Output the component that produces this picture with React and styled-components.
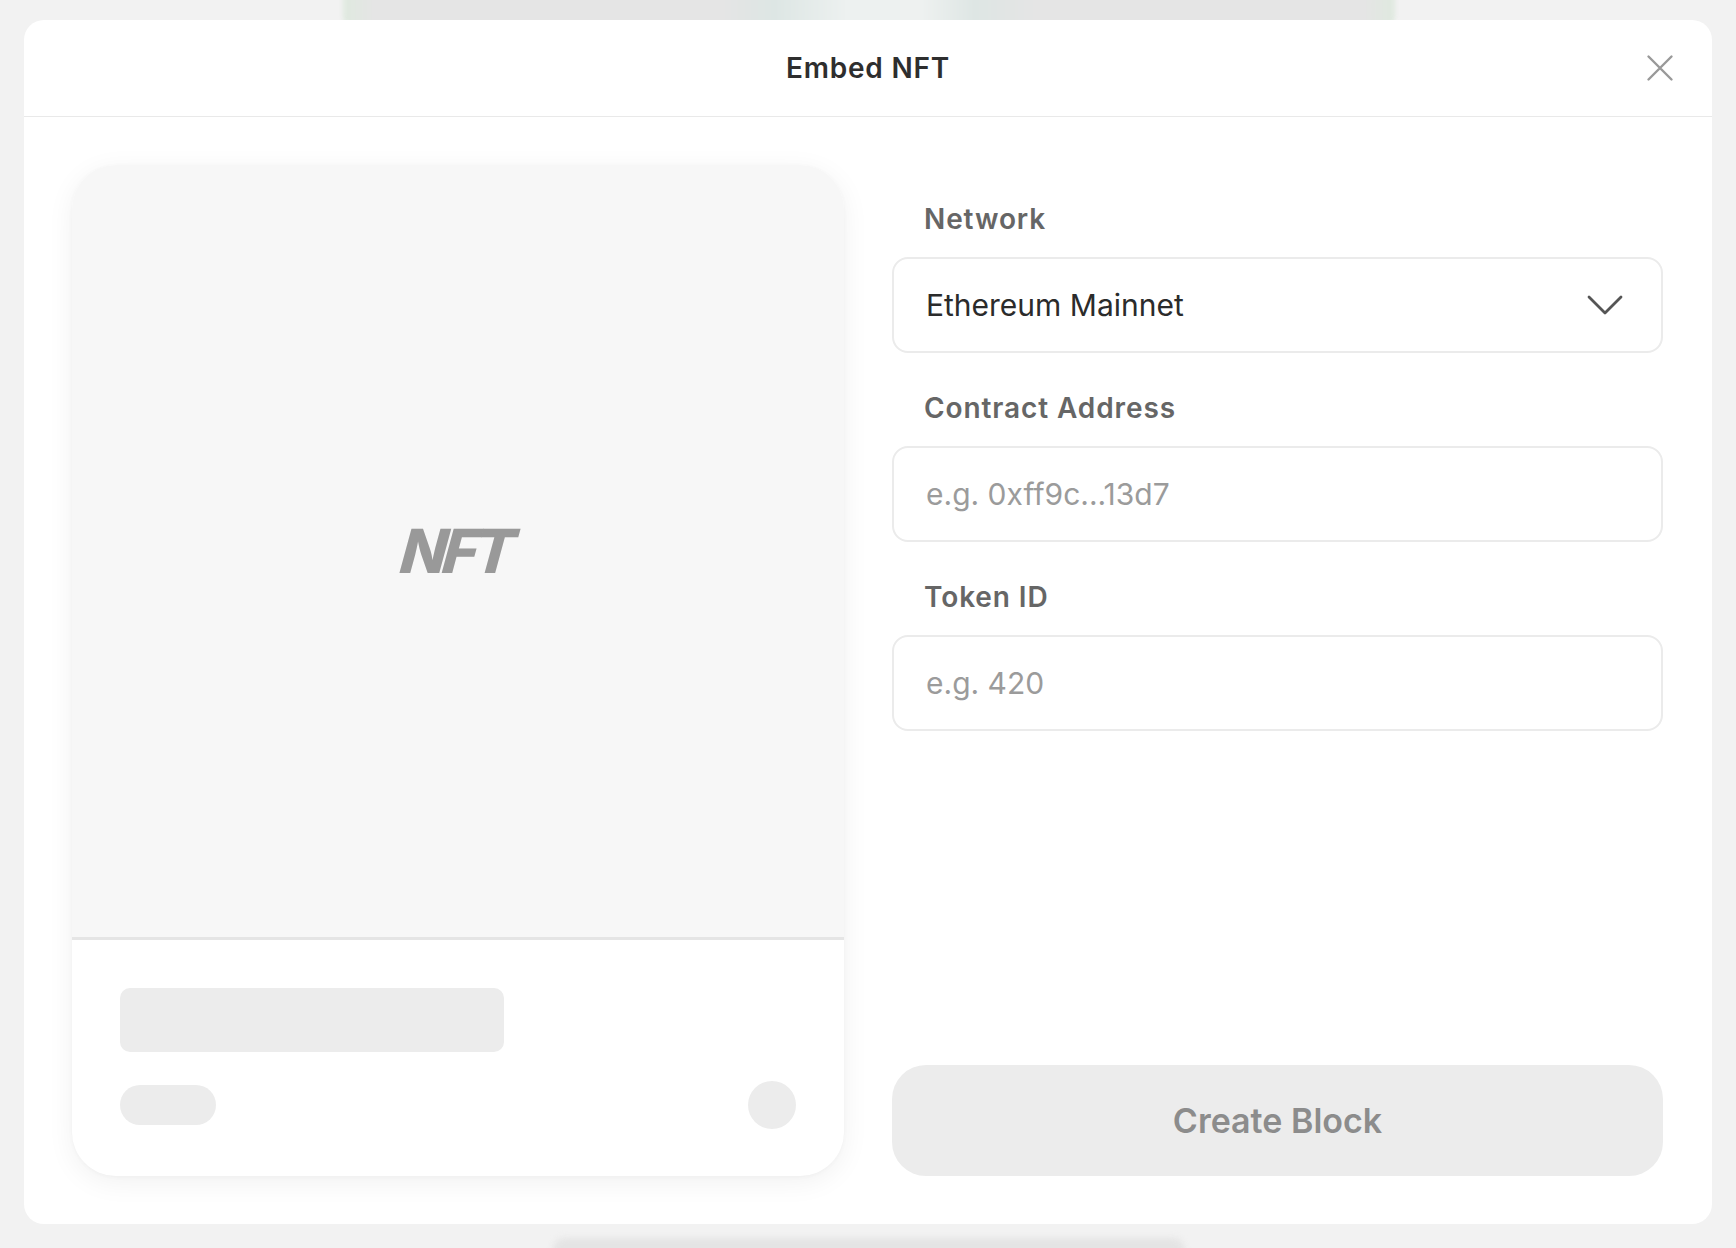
import React from "react";
import styled, { createGlobalStyle } from "styled-components";

const GlobalStyle = createGlobalStyle`
  html, body {
    margin: 0;
    padding: 0;
    background: #f2f2f2;
    font-family: Inter, "Noto Sans", "Liberation Sans", sans-serif;
    -webkit-font-smoothing: antialiased;
  }
  * { box-sizing: border-box; }
`;

const Page = styled.div`
  position: relative;
  width: 1736px;
  height: 1248px;
  overflow: hidden;
  padding: 20px 24px 24px;
`;

// content of the page behind the dialog
const BackdropTop = styled.div`
  position: absolute;
  top: -20px;
  left: 343px;
  width: 1052px;
  height: 48px;
  border-radius: 12px;
  background: linear-gradient(
    90deg,
    #dfe9df 0%,
    #e5e5e5 3%,
    #e5e5e5 36%,
    #dde6e4 41%,
    #edf1f0 48%,
    #eef1f0 55%,
    #dee6e4 60%,
    #e5e5e5 66%,
    #e5e5e5 97%,
    #dfe9df 100%
  );
  filter: blur(2px);
`;

const BackdropBottom = styled.div`
  position: absolute;
  bottom: -30px;
  left: 553px;
  width: 632px;
  height: 40px;
  border-radius: 12px;
  background: #e4e4e4;
  filter: blur(3px);
`;

const Modal = styled.div`
  position: relative;
  display: flex;
  flex-direction: column;
  width: 1688px;
  height: 1204px;
  background: #fff;
  border-radius: 20px;
  overflow: hidden;
`;

const Header = styled.div`
  position: relative;
  display: flex;
  align-items: center;
  justify-content: center;
  height: 97px;
  flex-shrink: 0;
  border-bottom: 1px solid #e9e9e9;
`;

const Title = styled.h1`
  margin: 0;
  font-size: 28px;
  font-weight: 600;
  color: #2e2e2e;
  letter-spacing: 0.8px;
`;

const CloseButton = styled.button`
  position: absolute;
  right: 38px;
  top: 50%;
  transform: translateY(-50%);
  display: flex;
  padding: 0;
  border: 0;
  background: none;
  cursor: pointer;
`;

const Body = styled.div`
  flex: 1;
  display: grid;
  grid-template-columns: 772px 771px;
  gap: 48px;
  padding: 48px;
`;

const PreviewCard = styled.div`
  display: flex;
  flex-direction: column;
  border-radius: 44px;
  overflow: hidden;
  background: #fff;
  box-shadow: 0 6px 28px rgba(0, 0, 0, 0.06), 0 1px 4px rgba(0, 0, 0, 0.03);
`;

const Artwork = styled.div`
  display: flex;
  align-items: center;
  justify-content: center;
  height: 775px;
  flex-shrink: 0;
  background: #f7f7f7;
  border-bottom: 3px solid #e5e5e5;
`;

const NftMark = styled.span`
  margin-right: 4px;
  font-size: 61px;
  font-weight: 800;
  font-style: italic;
  letter-spacing: -4.5px;
  color: #999;
  transform: skewX(-6deg);
`;

const CardFooter = styled.div`
  flex: 1;
  display: flex;
  flex-direction: column;
  gap: 29px;
  padding: 48px 48px 47px;
`;

const Skeleton = styled.div`
  width: ${(p) => p.$w}px;
  height: ${(p) => p.$h}px;
  border-radius: ${(p) => p.$r}px;
  background: #ececec;
`;

const FooterRow = styled.div`
  display: flex;
  align-items: center;
  justify-content: space-between;
`;

const Form = styled.div`
  display: flex;
  flex-direction: column;
  padding-top: 38px;
`;

const Field = styled.div`
  display: flex;
  flex-direction: column;
  gap: 22px;
  margin-bottom: 39px;
`;

const Label = styled.label`
  padding-left: 32px;
  font-size: 28px;
  line-height: 32px;
  font-weight: 600;
  letter-spacing: 0.9px;
  color: #666;
`;

const Box = styled.div`
  display: flex;
  align-items: center;
  justify-content: space-between;
  height: 96px;
  padding: 0 38px 0 32px;
  border: 2px solid #ebebeb;
  border-radius: 16px;
  background: #fff;
  font-size: 30px;
  color: ${(p) => (p.$placeholder ? "#9b9b9b" : "#2b2b2b")};
`;

const CreateButton = styled.button`
  margin-top: auto;
  height: 111px;
  border: 0;
  border-radius: 34px;
  background: #ececec;
  font-family: inherit;
  font-size: 34px;
  font-weight: 600;
  color: #8c8c8c;
`;

const CloseIcon = () => (
  <svg width="28" height="28" viewBox="0 0 28 28" fill="none">
    <path d="M2.5 2.5L25.5 25.5M25.5 2.5L2.5 25.5" stroke="#999" strokeWidth="2.4" strokeLinecap="round" />
  </svg>
);

const Chevron = () => (
  <svg width="36" height="22" viewBox="0 0 36 22" fill="none">
    <path d="M2 3L18 19L34 3" stroke="#555" strokeWidth="2.8" strokeLinecap="round" strokeLinejoin="round" />
  </svg>
);

export default function App() {
  return (
    <>
      <GlobalStyle />
      <Page>
        <BackdropTop />
        <BackdropBottom />
        <Modal>
          <Header>
            <Title>Embed NFT</Title>
            <CloseButton aria-label="Close">
              <CloseIcon />
            </CloseButton>
          </Header>
          <Body>
            <PreviewCard>
              <Artwork>
                <NftMark>NFT</NftMark>
              </Artwork>
              <CardFooter>
                <Skeleton $w={384} $h={64} $r={10} />
                <FooterRow>
                  <Skeleton $w={96} $h={40} $r={20} />
                  <Skeleton $w={48} $h={48} $r={24} />
                </FooterRow>
              </CardFooter>
            </PreviewCard>
            <Form>
              <Field>
                <Label>Network</Label>
                <Box>
                  Ethereum Mainnet
                  <Chevron />
                </Box>
              </Field>
              <Field>
                <Label>Contract Address</Label>
                <Box $placeholder>e.g. 0xff9c...13d7</Box>
              </Field>
              <Field>
                <Label>Token ID</Label>
                <Box $placeholder>e.g. 420</Box>
              </Field>
              <CreateButton>Create Block</CreateButton>
            </Form>
          </Body>
        </Modal>
      </Page>
    </>
  );
}
